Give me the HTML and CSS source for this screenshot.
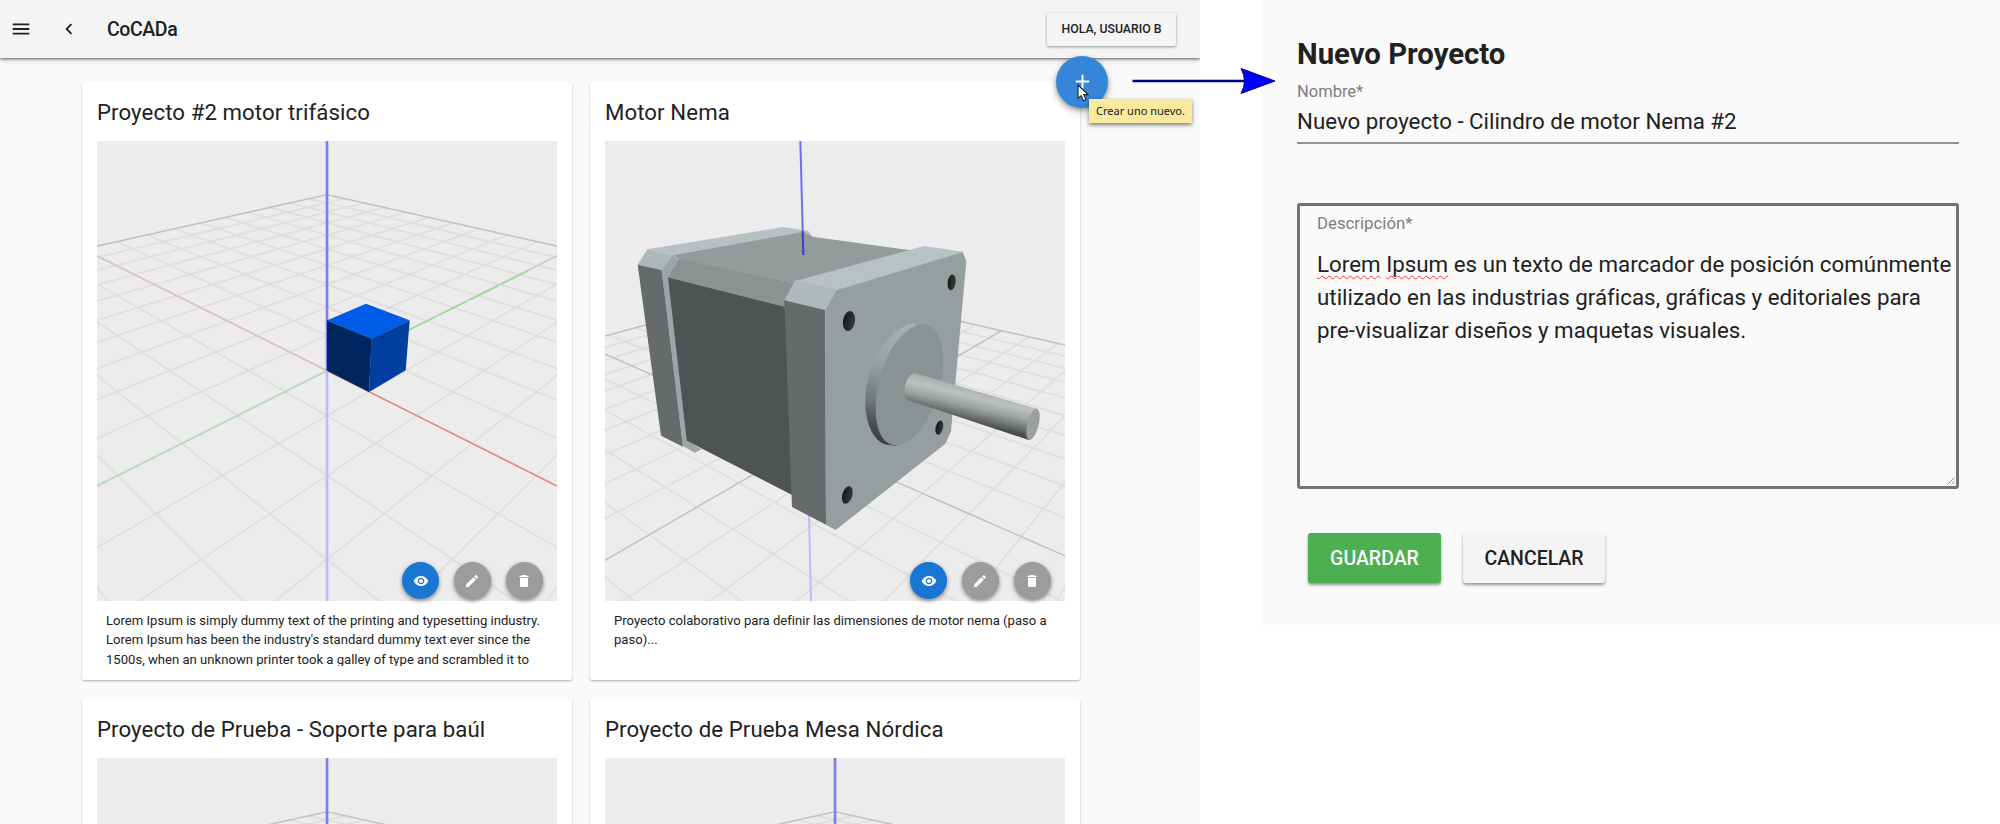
FILE: index.html
```html
<!DOCTYPE html>
<html lang="es">
<head>
<meta charset="utf-8">
<title>CoCADa</title>
<link rel="stylesheet" href="styles.css">
</head>
<body>
<svg class="defs" width="0" height="0" aria-hidden="true">
  <symbol id="eye" viewBox="0 0 24 24"><path d="M12 4.5C7 4.5 2.73 7.61 1 12c1.73 4.39 6 7.5 11 7.5s9.27-3.11 11-7.5c-1.73-4.39-6-7.5-11-7.5zM12 17c-2.76 0-5-2.24-5-5s2.24-5 5-5 5 2.24 5 5-2.240 5-5 5zm0-8c-1.660 0-3 1.340-3 3s1.340 3 3 3 3-1.340 3-3-1.340-3-3-3z"/></symbol>
  <symbol id="pencil" viewBox="0 0 24 24"><path d="M3 17.250V21h3.750L17.810 9.940l-3.750-3.750L3 17.250zM20.710 7.040c.390-.390.390-1.020 0-1.410l-2.340-2.340c-.390-.390-1.020-.390-1.410 0l-1.830 1.830 3.750 3.750 1.830-1.830z"/></symbol>
  <symbol id="trash" viewBox="0 0 24 24"><path d="M6 19c0 1.100.900 2 2 2h8c1.100 0 2-.900 2-2V7H6v12zM19 4h-3.500l-1-1h-5l-1 1H5v2h14V4z"/></symbol>
</svg>

<div class="layout">
  <main class="app">
    <header class="toolbar">
      <svg class="icon menu" viewBox="0 0 24 24"><path d="M3 18h18v-2H3v2zm0-5h18v-2H3v2zm0-7v2h18V6H3z"/></svg>
      <svg class="icon back" viewBox="0 0 24 24"><path d="M15.410 7.410L14 6l-6 6 6 6 1.410-1.410L10.830 12z"/></svg>
      <h1 class="brand">CoCADa</h1>
      <button class="user">HOLA, USUARIO B</button>
      <div class="create">
        <button class="fab"><svg class="plus" viewBox="0 0 24 24"><path d="M19 13h-6v6h-2v-6H5v-2h6V5h2v6h6v2z"/></svg></button>
        <svg class="cursor" viewBox="0 0 12 18"><path d="M1 1v13.500l3.200-2.900 2.300 5.200 2.500-1.100-2.300-5.100h4.400z"/></svg>
        <span class="tooltip">Crear uno nuevo.</span>
      </div>
    </header>

    <section class="cards">
      <article class="card">
        <h2 class="card-title">Proyecto #2 motor trifásico</h2>
        <div class="scene">
          <svg class="view" viewBox="51 33 1380 1380">
            <g class="grid" data-camera="iso"></g>
            <path class="x-far" d="M51 378L741 722"/><path class="x-near" d="M741 722L1431 1068"/>
            <path class="y-axis" d="M51 1068L741 722"/><path class="y-axis dim" d="M741 722L1431 378"/>
            <path class="y-axis bright" d="M985 601L1345 423"/>
            <path class="z-up" d="M741 33V722"/><path class="z-down" d="M741 722V1413"/>
            <path fill="#005be8" d="M742 571L858 521 989 571 874 628z"/>
            <path fill="#00265f" d="M741 571L875 627 867 786 741 722z"/>
            <path fill="#003f9f" d="M874 627L989 571 977 721 867 786z"/>
          </svg>
          <div class="actions">
            <button class="round view-btn"><svg viewBox="0 0 24 24"><use href="#eye"/></svg></button>
            <button class="round"><svg viewBox="0 0 24 24"><use href="#pencil"/></svg></button>
            <button class="round"><svg viewBox="0 0 24 24"><use href="#trash"/></svg></button>
          </div>
        </div>
        <p class="card-text">Lorem Ipsum is simply dummy text of the printing and typesetting industry.<br>Lorem Ipsum has been the industry's standard dummy text ever since the<br>1500s, when an unknown printer took a galley of type and scrambled it to</p>
      </article>

      <article class="card">
        <h2 class="card-title">Motor Nema</h2>
        <div class="scene">
          <svg class="view" viewBox="45 33 1380 1380">
            <defs>
              <linearGradient id="shaft" gradientUnits="userSpaceOnUse" x1="1150" y1="774" x2="1126" y2="874">
                <stop offset="0" stop-color="#a9adab"/><stop offset=".25" stop-color="#bdc1bf"/><stop offset=".55" stop-color="#9da1a0"/><stop offset=".85" stop-color="#666a69"/><stop offset="1" stop-color="#4a4d4c"/>
              </linearGradient>
              <linearGradient id="rim" gradientUnits="userSpaceOnUse" x1="940" y1="580" x2="860" y2="940">
                <stop offset="0" stop-color="#a9b2b5"/><stop offset=".35" stop-color="#98a1a4"/><stop offset=".65" stop-color="#747b7d"/><stop offset=".85" stop-color="#4b5051"/><stop offset="1" stop-color="#3c4041"/>
              </linearGradient>
              <linearGradient id="hole" x1="0" y1="0" x2="1" y2="0">
                <stop offset="0" stop-color="#161616"/><stop offset="1" stop-color="#3c3b3b"/>
              </linearGradient>
            </defs>
            <g class="grid" data-camera="motor"></g>
            <path class="z-down thin" d="M657 1150L663 1413"/>
            <path fill="#9ca5a8" d="M215 420L246 376 270 390 236 440 290 932 335 958 314 968 279 948z"/>
            <path fill="#b8c0c3" d="M172 358L580 291 655 303 668 320 640 308 246 376z"/>
            <path fill="#adb6b9" d="M143 404L172 358 246 376 215 420z"/>
            <path fill="#666a6a" d="M143 404L215 420 279 950 213 917z"/>
            <path fill="#959b9b" d="M246 376L640 306 668 320 955 360 1000 370 618 460 268 388z"/>
            <path fill="#8b9291" d="M268 386L612 458 590 532 234 442z"/>
            <path fill="#4f5354" d="M234 442L590 532 612 1098 290 932z"/>
            <path fill="#b9c1c4" d="M616 453L1003 348 1118 365 741 480z"/>
            <path fill="#b0b8bb" d="M583 511L616 450 742 479 706 540z"/>
            <path fill="#656a6a" d="M583 511L706 540 708 1184 606 1131z"/>
            <path fill="#969ea0" d="M706 540L741 479 1118 365 1129 394 1083 904 1066 941 737 1200 708 1184z"/>
            <path fill="none" stroke="#b7bfc2" stroke-width="3" d="M741 479L1118 365"/>
            <ellipse cx="777" cy="573" rx="18" ry="30" transform="rotate(10 777 573)" fill="url(#hole)"/>
            <ellipse cx="1085" cy="457" rx="12" ry="24" transform="rotate(8 1085 457)" fill="url(#hole)"/>
            <ellipse cx="1048" cy="893" rx="11" ry="22" transform="rotate(13 1048 893)" fill="url(#hole)"/>
            <ellipse cx="772" cy="1095" rx="15" ry="27" transform="rotate(16 772 1095)" fill="url(#hole)"/>
            <path fill="url(#rim)" d="M970 580C900 592 826 700 826 815C826 880 850 935 890 944L920 947 1000 600z"/>
            <path fill="#8b9294" d="M993 582C920 596 857 718 857 835C857 908 882 947 920 946C990 940 1060 812 1060 690C1060 622 1034 580 993 582z"/>
            <path fill="url(#shaft)" d="M974 729L1343 837 1316 930 947 808C936 778 950 735 974 729z"/>
            <ellipse cx="1329" cy="883" rx="17" ry="48" transform="rotate(14 1329 883)" fill="#9b9f9d"/>
            <path class="z-front" d="M631 33L640 375"/><path class="z-front deep" d="M638 304L640 375"/>
          </svg>
          <div class="actions">
            <button class="round view-btn"><svg viewBox="0 0 24 24"><use href="#eye"/></svg></button>
            <button class="round"><svg viewBox="0 0 24 24"><use href="#pencil"/></svg></button>
            <button class="round"><svg viewBox="0 0 24 24"><use href="#trash"/></svg></button>
          </div>
        </div>
        <p class="card-text">Proyecto colaborativo para definir las dimensiones de motor nema (paso a<br>paso)...</p>
      </article>

      <article class="card">
        <h2 class="card-title">Proyecto de Prueba - Soporte para baúl</h2>
        <div class="scene"><svg class="view" viewBox="51 33 1380 1380"><g class="grid" data-camera="iso"></g><path class="z-up" d="M741 33V722"/></svg></div>
      </article>
      <article class="card">
        <h2 class="card-title">Proyecto de Prueba Mesa Nórdica</h2>
        <div class="scene"><svg class="view" viewBox="51 33 1380 1380"><g class="grid" data-camera="iso"></g><path class="z-up" d="M741 33V722"/></svg></div>
      </article>
    </section>
  </main>

  <svg class="arrow" viewBox="0 0 146 30"><path class="shaft" d="M2.500 15H116"/><path class="head" d="M111 2.500L145 15 111 27.500Q118 15 111 2.500z"/></svg>

  <form class="panel">
    <h2 class="panel-title">Nuevo Proyecto</h2>
    <div class="field">
      <label class="label">Nombre*</label>
      <div class="value">Nuevo proyecto - Cilindro de motor Nema #2</div>
    </div>
    <div class="area">
      <label class="label">Descripción*</label>
      <div class="value area-value"><span class="typo">Lorem</span> <span class="typo">Ipsum</span> es un texto de marcador de posición comúnmente<br>utilizado en las industrias gráficas, gráficas y editoriales para<br>pre-visualizar diseños y maquetas visuales.</div>
      <svg class="grip" viewBox="0 0 8 8"><path d="M.5 7.500L7.500 .5M4.500 7.500L7.500 4.500"/></svg>
    </div>
    <div class="buttons">
      <button class="btn save" type="button">GUARDAR</button>
      <button class="btn" type="button">CANCELAR</button>
    </div>
  </form>
</div>
<script src="grid.js"></script>
</body>
</html>
```
FILE: styles.css
```css
* { box-sizing: border-box; }
body { margin: 0; background: #fff; font-family: Roboto, "Liberation Sans", sans-serif; color: #212121; overflow: hidden; font-variant-ligatures: none; }
h1, h2, p { margin: 0; font-weight: 400; white-space: nowrap; }
button { border: 0; padding: 0; font: inherit; color: inherit; white-space: nowrap; }
.defs { position: absolute; }
.layout { display: flex; width: 2000px; height: 824px; align-items: flex-start; overflow: hidden; }

.app { width: 1200px; height: 824px; background: #fafafa; overflow: hidden; flex: none; }
.toolbar { position: relative; z-index: 2; display: flex; align-items: center; height: 58px; padding: 0 24px 0 10px; background: #f4f4f4; box-shadow: 0 1px 2px rgba(0,0,0,.45), 0 2px 5px rgba(0,0,0,.25); }
.icon { width: 22px; height: 22px; fill: #212121; }
.back { margin-left: 26px; }
.brand { margin-left: 27px; padding-top: 1px; font-size: 19.500px; font-weight: 500; line-height: 57px; letter-spacing: -.4px; }
.user { margin-left: auto; width: 129px; height: 33px; border-radius: 2px; background: #f4f4f4; font-size: 12.300px; font-weight: 500; box-shadow: 0 1px 3px rgba(0,0,0,.4); }

.create { position: absolute; left: 1056px; top: 55.500px; width: 52px; height: 52px; }
.fab { display: grid; place-items: center; width: 52px; height: 52px; border-radius: 50%; background: #3586d8; box-shadow: 0 2px 4px rgba(0,0,0,.3), 0 4px 9px rgba(0,0,0,.2); }
.plus { width: 23px; height: 23px; fill: #fff; }
.cursor { position: absolute; left: 21px; top: 28px; width: 12px; height: 18px; fill: #fff; stroke: #222; stroke-width: 1.1; overflow: visible; }
.tooltip { position: absolute; left: 33px; top: 43.500px; width: 103px; height: 24px; background: #fae99f; font: 11px/24px "Noto Sans", sans-serif; text-align: center; white-space: nowrap; box-shadow: 0 2px 4px rgba(0,0,0,.5); }

.cards { display: grid; grid-template-columns: 490px 490px; grid-auto-rows: 598px; gap: 19px 18px; padding: 24px 0 0 82px; }
.card { display: flex; flex-direction: column; padding: 0 15px; background: #fff; border-radius: 2px; box-shadow: 0 1px 2px rgba(0,0,0,.3); }
.card-title { font-size: 22.200px; line-height: 60px; height: 59px; letter-spacing: .1px; }
.scene { position: relative; flex: none; width: 460px; height: 460px; background: #ececec; }
.view { display: block; width: 460px; height: 460px; overflow: hidden; fill: none; }
.actions { position: absolute; right: 14.5px; top: 421px; display: flex; gap: 14.700px; }
.round { display: grid; place-items: center; width: 37px; height: 37px; border-radius: 50%; background: #9c9c9c; box-shadow: 0 2px 4px rgba(0,0,0,.45); }
.round svg { width: 16px; height: 16px; fill: #fff; }
.view-btn { background: #1976d2; }
.card-text { margin: 10px 0 0 9px; height: 55px; overflow: hidden; font-size: 13.100px; line-height: 19.400px; }

.grid path { stroke: #dfdfdf; stroke-width: 5.500; }
.grid .edge { stroke: #c0c0c0; stroke-width: 4.500; }
.x-far { stroke: #d8b8b8; stroke-width: 4; }
.x-near { stroke: #e58484; stroke-width: 4.500; }
.y-axis { stroke: #b9dab9; stroke-width: 5; }
.y-axis.dim { stroke: #c4c8c4; stroke-width: 4; }
.y-axis.bright { stroke: #93dc93; stroke-width: 4; stroke-dasharray: 90 14; }
.z-up { stroke: #7c7cf6; stroke-width: 8; }
.z-down { stroke: #bdbdf6; stroke-width: 8; }
.z-down.thin { stroke-width: 6; }
.z-front { stroke: #6e6ef4; stroke-width: 6; }
.z-front.deep { stroke: #3f3fc9; }

.arrow { flex: none; width: 146px; height: 30px; margin: 66px -85px 0 -70px; position: relative; z-index: 3; fill: none; }
.arrow .shaft { stroke: #000088; stroke-width: 2.500; }
.arrow .head { fill: #00f; stroke: #000080; stroke-width: 1; }

.panel { width: 739px; margin-left: 70px; height: 625px; padding: 35px 41px 0 36px; background: #fafafa; flex: none; }
.panel-title { font-size: 29.300px; font-weight: 700; line-height: 38px; }
.label { display: block; font-size: 16.500px; line-height: 22px; color: #7d7d7d; white-space: nowrap; }
.value { font-size: 22.300px; white-space: nowrap; }
.field { padding-top: 8px; height: 71px; border-bottom: 2px solid #949494; }
.field .value { padding-top: 1px; line-height: 34px; }
.area { position: relative; margin-top: 59px; height: 286px; padding: 5px 0 0 17px; border: 3px solid #737373; border-radius: 3px; }
.area .label { margin-top: 1px; font-size: 16.800px; }
.area-value { margin-top: 14px; line-height: 33px; letter-spacing: .02px; }
.typo { text-decoration: underline wavy #f33 1px; text-underline-offset: 3px; text-decoration-skip-ink: none; }
.grip { position: absolute; right: 1px; bottom: 1px; width: 8px; height: 8px; fill: none; stroke: #777; stroke-width: .8; }
.buttons { display: flex; gap: 22px; padding: 44px 0 0 11px; }
.btn { width: 142px; height: 50px; border-radius: 3px; background: #f4f4f4; font-size: 19.500px; font-weight: 500; box-shadow: 0 2px 3px rgba(0,0,0,.4); }
.save { width: 133px; background: #4caf50; color: #fff; }
```
FILE: grid.js
```js
// Projects the 20x20 ground plane of each scene to the picture plane.
const cameras = {
  iso: {
    project(i, j) {
      const w = 8.05 - (i + j) / 2;
      return w < 0.8 ? null : [741 + 1900 * (i - j) / 2 / w, -231 + 7671 / w];
    }
  },
  motor: {
    project(i, j) {
      const a = -i / 10, b = -j / 10, w = 1 + 0.4508 * a + 0.5729 * b;
      return w < 0.15 ? null : [(653 - 697.97 * a + 1289.5 * b) / w, (939 - 11.9 * a + 7.9 * b) / w];
    },
    axes: true
  }
};

function line(group, points, edge) {
  const visible = points.filter(Boolean);
  if (visible.length < 2) return;
  const path = document.createElementNS("http://www.w3.org/2000/svg", "path");
  path.setAttribute("d", "M" + visible.map(p => p.map(n => n.toFixed(1)).join(" ")).join("L"));
  if (edge) path.setAttribute("class", "edge");
  group.append(path);
}

document.querySelectorAll(".grid").forEach(group => {
  const camera = cameras[group.dataset.camera];
  const steps = Array.from({ length: 81 }, (_, n) => n / 4 - 10);
  const order = [...Array(21).keys()].map(n => n - 10).sort((m, n) => Number(strong(m)) - Number(strong(n)));
  function strong(k) { return Math.abs(k) === 10 || (camera.axes === true && k === 0); }
  order.forEach(k => {
    line(group, steps.map(s => camera.project(k, s)), strong(k));
    line(group, steps.map(s => camera.project(s, k)), strong(k));
  });
});
```
